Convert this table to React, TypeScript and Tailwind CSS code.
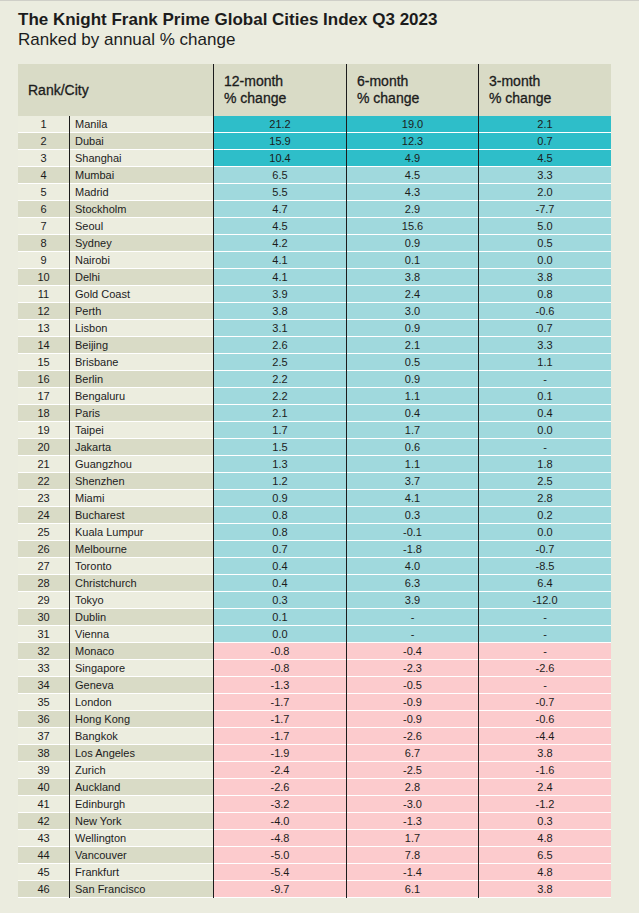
import React from "react";

type Row = [number, string, string, string, string];

const rows: Row[] = [
  [1, "Manila", "21.2", "19.0", "2.1"],
  [2, "Dubai", "15.9", "12.3", "0.7"],
  [3, "Shanghai", "10.4", "4.9", "4.5"],
  [4, "Mumbai", "6.5", "4.5", "3.3"],
  [5, "Madrid", "5.5", "4.3", "2.0"],
  [6, "Stockholm", "4.7", "2.9", "-7.7"],
  [7, "Seoul", "4.5", "15.6", "5.0"],
  [8, "Sydney", "4.2", "0.9", "0.5"],
  [9, "Nairobi", "4.1", "0.1", "0.0"],
  [10, "Delhi", "4.1", "3.8", "3.8"],
  [11, "Gold Coast", "3.9", "2.4", "0.8"],
  [12, "Perth", "3.8", "3.0", "-0.6"],
  [13, "Lisbon", "3.1", "0.9", "0.7"],
  [14, "Beijing", "2.6", "2.1", "3.3"],
  [15, "Brisbane", "2.5", "0.5", "1.1"],
  [16, "Berlin", "2.2", "0.9", "-"],
  [17, "Bengaluru", "2.2", "1.1", "0.1"],
  [18, "Paris", "2.1", "0.4", "0.4"],
  [19, "Taipei", "1.7", "1.7", "0.0"],
  [20, "Jakarta", "1.5", "0.6", "-"],
  [21, "Guangzhou", "1.3", "1.1", "1.8"],
  [22, "Shenzhen", "1.2", "3.7", "2.5"],
  [23, "Miami", "0.9", "4.1", "2.8"],
  [24, "Bucharest", "0.8", "0.3", "0.2"],
  [25, "Kuala Lumpur", "0.8", "-0.1", "0.0"],
  [26, "Melbourne", "0.7", "-1.8", "-0.7"],
  [27, "Toronto", "0.4", "4.0", "-8.5"],
  [28, "Christchurch", "0.4", "6.3", "6.4"],
  [29, "Tokyo", "0.3", "3.9", "-12.0"],
  [30, "Dublin", "0.1", "-", "-"],
  [31, "Vienna", "0.0", "-", "-"],
  [32, "Monaco", "-0.8", "-0.4", "-"],
  [33, "Singapore", "-0.8", "-2.3", "-2.6"],
  [34, "Geneva", "-1.3", "-0.5", "-"],
  [35, "London", "-1.7", "-0.9", "-0.7"],
  [36, "Hong Kong", "-1.7", "-0.9", "-0.6"],
  [37, "Bangkok", "-1.7", "-2.6", "-4.4"],
  [38, "Los Angeles", "-1.9", "6.7", "3.8"],
  [39, "Zurich", "-2.4", "-2.5", "-1.6"],
  [40, "Auckland", "-2.6", "2.8", "2.4"],
  [41, "Edinburgh", "-3.2", "-3.0", "-1.2"],
  [42, "New York", "-4.0", "-1.3", "0.3"],
  [43, "Wellington", "-4.8", "1.7", "4.8"],
  [44, "Vancouver", "-5.0", "7.8", "6.5"],
  [45, "Frankfurt", "-5.4", "-1.4", "4.8"],
  [46, "San Francisco", "-9.7", "6.1", "3.8"],
];

function dataBg(rank: number) {
  if (rank <= 3) return "bg-[#2ebec9]";
  if (rank <= 31) return "bg-[#a0d9dd]";
  return "bg-[#fccbcd]";
}

export default function App() {
  return (
    <div
      className="min-h-[913px] w-[639px] bg-[#ebecdf] border-t border-[#cfcfc8] text-[#1c1c1c]"
      style={{ fontFamily: '"Liberation Sans", Arial, sans-serif' }}
    >
      <div className="pl-[18px] pt-[9px]">
        <div className="text-[17px] leading-[20px] font-bold">
          The Knight Frank Prime Global Cities Index Q3 2023
        </div>
        <div className="text-[17px] leading-[20px]">Ranked by annual % change</div>
      </div>

      <div className="ml-[18px] mt-[14px] w-[593px]">
        {/* header */}
        <div className="flex h-[52px] bg-[#d9dbc6] text-[14px] leading-[17px] [-webkit-text-stroke:0.3px_#1c1c1c]">
          <div className="w-[195px] flex items-center pl-[10px]">Rank/City</div>
          {["12-month", "6-month", "3-month"].map((h, i) => (
            <div
              key={h}
              className={`border-l border-[#1c1c1c] flex flex-col justify-center pl-[10px] ${
                i === 1 ? "w-[132px]" : "w-[133px]"
              }`}
            >
              <div>{h}</div>
              <div>% change</div>
            </div>
          ))}
        </div>

        {/* body */}
        {rows.map(([rank, city, a, b, c]) => {
          const rowBg = rank % 2 === 0 ? "bg-[#d9dbc6]" : "bg-[#eceddf]";
          const dbg = dataBg(rank);
          return (
            <div key={rank} className="flex h-[17px] text-[11px] leading-[16px]">
              <div
                className={`w-[51px] border-b border-white flex items-center justify-center ${rowBg}`}
              >
                {rank}
              </div>
              <div className="w-[144px] border-l border-[#1c1c1c]">
                <div className={`h-full border-b border-white pl-[5px] flex items-center ${rowBg}`}>
                  {city}
                </div>
              </div>
              {[a, b, c].map((v, i) => (
                <div
                  key={i}
                  className={`border-l border-[#1c1c1c] ${i === 1 ? "w-[132px]" : "w-[133px]"}`}
                >
                  <div
                    className={`h-full border-b border-white flex items-center justify-center ${dbg}`}
                  >
                    {v}
                  </div>
                </div>
              ))}
            </div>
          );
        })}
      </div>
    </div>
  );
}
